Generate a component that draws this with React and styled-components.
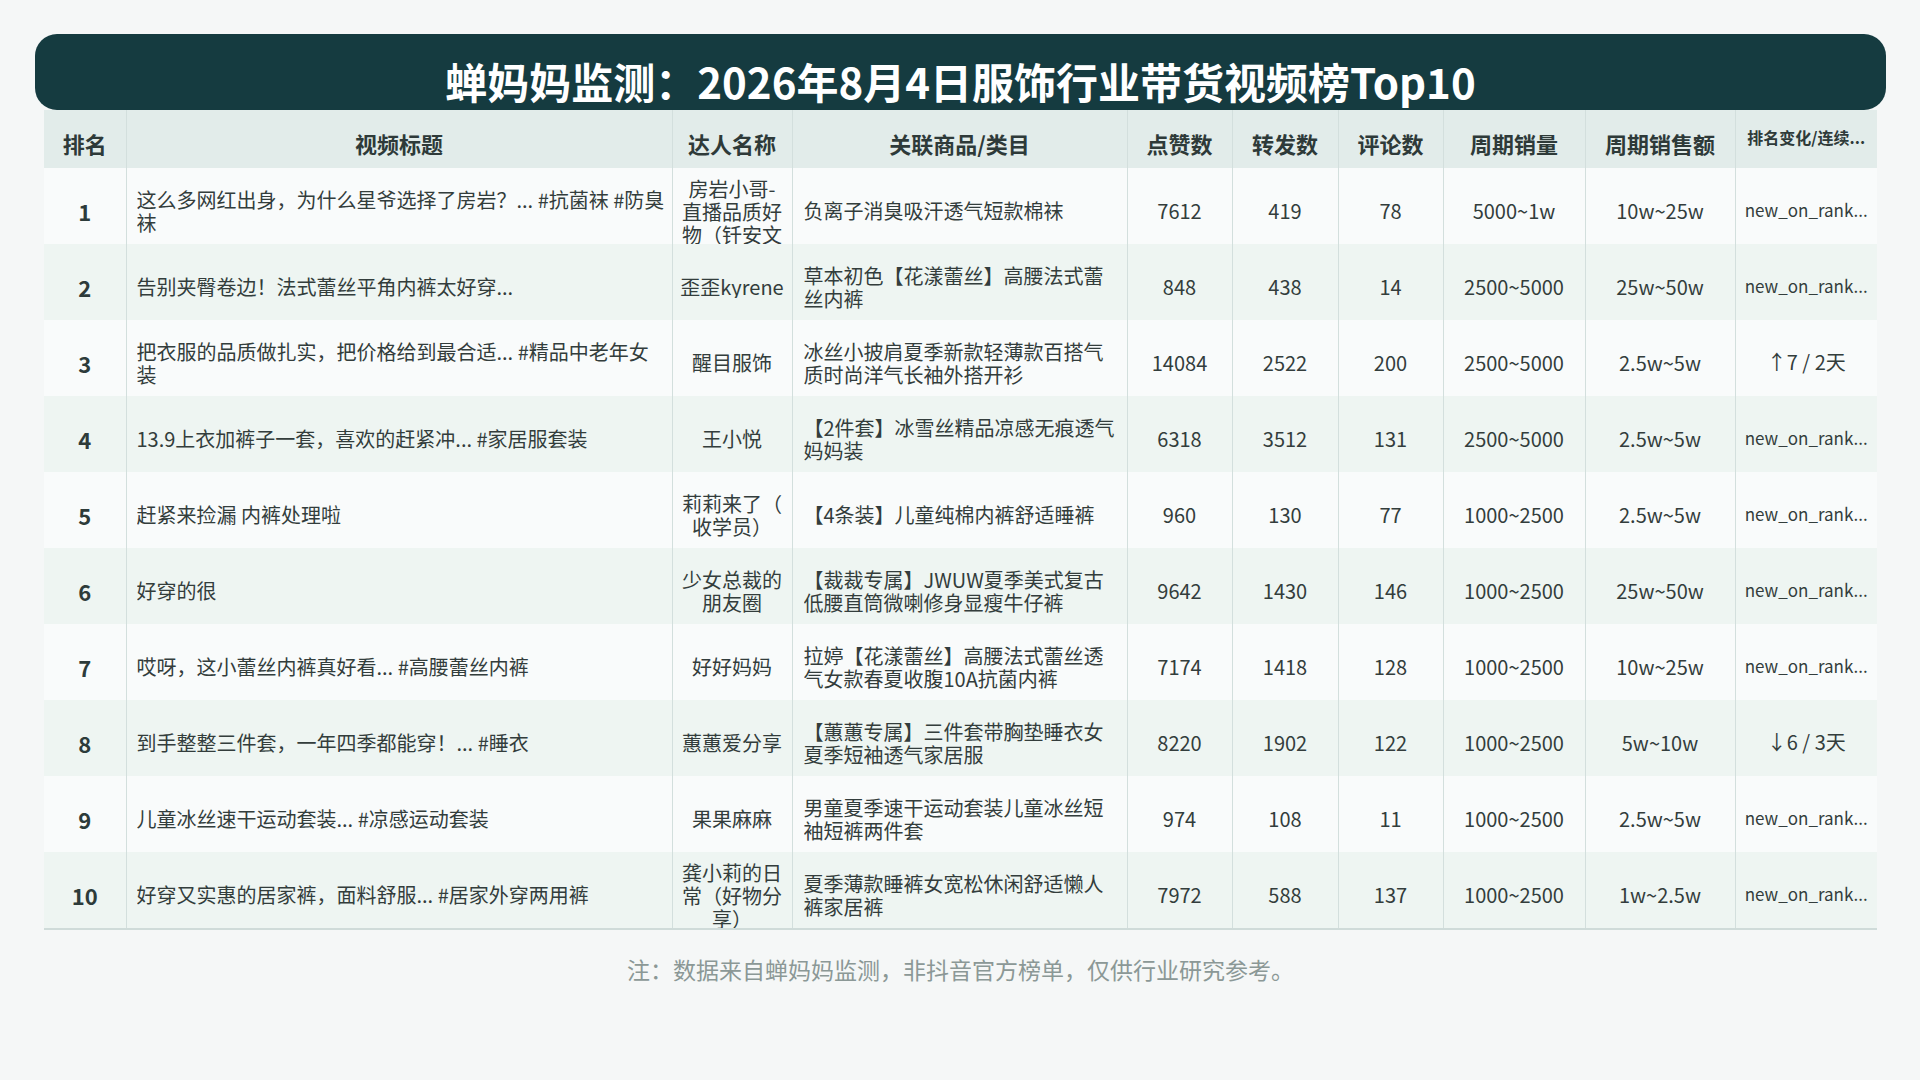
import React from 'react';
import styled, { createGlobalStyle } from 'styled-components';

const GlobalStyle = createGlobalStyle`
  html, body {
    margin:0;
    padding:0;
    background:#f5f7f7;
  }
  body {
    font-family:"Noto Sans CJK SC", "Noto Sans", sans-serif;
    color:#333d3c;
  }
`

const Page = styled.div`
  width:1920px;
  height:1080px;
  box-sizing:border-box;
  padding:34px 34px 0 35px;
  display:flex;
  flex-direction:column;
`

const TitleBar = styled.div`
  background-color:#153b40;
  border-radius:22px;
  height:76px;
  box-sizing:border-box;
  padding:22px 0 4px;
  text-align:center;
`

const Title = styled.h1`
  margin:0;
  font-size:42px;
  line-height:50px;
  font-weight:700;
  color:#ffffff;
`

const TableWrap = styled.div`
  margin:0 9px;
`

const Table = styled.table`
  width:1833px;
  table-layout:fixed;
  border-collapse:collapse;
  border-bottom:2px solid #cfdbd9;
`

const HeadCell = styled.th`
  height:58px;
  box-sizing:border-box;
  padding:${({ $small }) => $small ? '0 8px 4px' : '8px 6px 0'};
  background-color:#e2ecea;
  color:#2e3a39;
  font-size:${({ $small }) => $small ? '16px' : '22px'};
  font-weight:700;
  text-align:center;
  white-space:nowrap;
  overflow:hidden;
  & + & {
    border-left:1px solid #d3dfdd;
  }
`

const Row = styled.tr`
  background-color:${({ $even }) => $even ? '#eef5f2' : '#f9fbfb'};
`

const Cell = styled.td`
  height:76px;
  box-sizing:border-box;
  padding:${({ $pad }) => $pad || '9px 8px 0'};
  font-size:${({ $size }) => $size || '20px'};
  font-weight:${({ $bold }) => $bold ? 700 : 400};
  text-align:${({ $left }) => $left ? 'left' : 'center'};
  vertical-align:middle;
  color:${({ $bold }) => $bold ? '#2d3b3a' : '#333d3c'};
  & + & {
    border-left:1px solid #d3dfdd;
  }
`

const Clamp = styled.div`
  line-height:23px;
  max-height:67px;
  overflow:hidden;
  line-break:${({ $anywhere }) => $anywhere ? 'anywhere' : 'auto'};
`

const Note = styled.p`
  margin:22px 0 0;
  text-align:center;
  font-size:23px;
  color:#8b9896;
`

const widths = [82, 546, 120, 335, 105, 106, 105, 142, 150, 142];

const heads = ['排名', '视频标题', '达人名称', '关联商品/类目', '点赞数', '转发数', '评论数', '周期销量', '周期销售额'];

const rows = [
  { title: '这么多网红出身，为什么星爷选择了房岩？... #抗菌袜 #防臭袜', author: '房岩小哥-直播品质好物（钎安文化）', product: '负离子消臭吸汗透气短款棉袜', likes: 7612, shares: 419, comments: 78, volume: '5000~1w', amount: '10w~25w', change: 'new_on_rank...' },
  { title: '告别夹臀卷边！法式蕾丝平角内裤太好穿...', author: '歪歪kyrene', product: '草本初色【花漾蕾丝】高腰法式蕾丝内裤', likes: 848, shares: 438, comments: 14, volume: '2500~5000', amount: '25w~50w', change: 'new_on_rank...' },
  { title: '把衣服的品质做扎实，把价格给到最合适... #精品中老年女装', author: '醒目服饰', product: '冰丝小披肩夏季新款轻薄款百搭气质时尚洋气长袖外搭开衫', likes: 14084, shares: 2522, comments: 200, volume: '2500~5000', amount: '2.5w~5w', change: '↑7 / 2天' },
  { title: '13.9上衣加裤子一套，喜欢的赶紧冲... #家居服套装', author: '王小悦', product: '【2件套】冰雪丝精品凉感无痕透气妈妈装', likes: 6318, shares: 3512, comments: 131, volume: '2500~5000', amount: '2.5w~5w', change: 'new_on_rank...' },
  { title: '赶紧来捡漏 内裤处理啦', author: '莉莉来了（收学员）', product: '【4条装】儿童纯棉内裤舒适睡裤', likes: 960, shares: 130, comments: 77, volume: '1000~2500', amount: '2.5w~5w', change: 'new_on_rank...' },
  { title: '好穿的很', author: '少女总裁的朋友圈', product: '【裁裁专属】JWUW夏季美式复古低腰直筒微喇修身显瘦牛仔裤', likes: 9642, shares: 1430, comments: 146, volume: '1000~2500', amount: '25w~50w', change: 'new_on_rank...' },
  { title: '哎呀，这小蕾丝内裤真好看... #高腰蕾丝内裤', author: '好好妈妈', product: '拉婷【花漾蕾丝】高腰法式蕾丝透气女款春夏收腹10A抗菌内裤', likes: 7174, shares: 1418, comments: 128, volume: '1000~2500', amount: '10w~25w', change: 'new_on_rank...' },
  { title: '到手整整三件套，一年四季都能穿！... #睡衣', author: '蕙蕙爱分享', product: '【蕙蕙专属】三件套带胸垫睡衣女夏季短袖透气家居服', likes: 8220, shares: 1902, comments: 122, volume: '1000~2500', amount: '5w~10w', change: '↓6 / 3天' },
  { title: '儿童冰丝速干运动套装... #凉感运动套装', author: '果果麻麻', product: '男童夏季速干运动套装儿童冰丝短袖短裤两件套', likes: 974, shares: 108, comments: 11, volume: '1000~2500', amount: '2.5w~5w', change: 'new_on_rank...' },
  { title: '好穿又实惠的居家裤，面料舒服... #居家外穿两用裤', author: '龚小莉的日常（好物分享）', product: '夏季薄款睡裤女宽松休闲舒适懒人裤家居裤', likes: 7972, shares: 588, comments: 137, volume: '1000~2500', amount: '1w~2.5w', change: 'new_on_rank...' },
];

export default function App() {
  return (
    <>
      <GlobalStyle />
      <Page>
        <TitleBar>
          <Title>蝉妈妈监测：2026年8月4日服饰行业带货视频榜Top10</Title>
        </TitleBar>
        <TableWrap>
          <Table>
            <colgroup>
              {widths.map((w, i) => <col key={i} style={{ width: w }} />)}
            </colgroup>
            <thead>
              <tr>
                {heads.map(h => <HeadCell key={h}>{h}</HeadCell>)}
                <HeadCell $small>排名变化/连续...</HeadCell>
              </tr>
            </thead>
            <tbody>
              {rows.map((r, i) => (
                <Row key={i} $even={i % 2 === 1}>
                  <Cell $bold $size="22px" $pad="10px 6px 0">{i + 1}</Cell>
                  <Cell $left $pad="9px 5px 0 10px"><Clamp>{r.title}</Clamp></Cell>
                  <Cell $pad="9px 7px 0"><Clamp $anywhere>{r.author}</Clamp></Cell>
                  <Cell $left $pad="9px 11px 0"><Clamp>{r.product}</Clamp></Cell>
                  <Cell>{r.likes}</Cell>
                  <Cell>{r.shares}</Cell>
                  <Cell>{r.comments}</Cell>
                  <Cell>{r.volume}</Cell>
                  <Cell>{r.amount}</Cell>
                  <Cell $size={r.change.startsWith('new') ? '17px' : '20px'} $pad="6px 8px 0">{r.change}</Cell>
                </Row>
              ))}
            </tbody>
          </Table>
        </TableWrap>
        <Note>注：数据来自蝉妈妈监测，非抖音官方榜单，仅供行业研究参考。</Note>
      </Page>
    </>
  );
}
